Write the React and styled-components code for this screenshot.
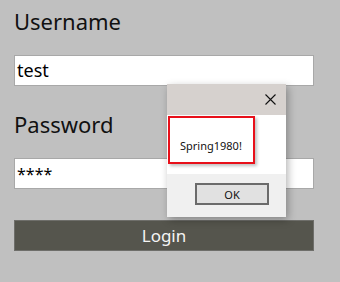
import React from "react";
import styled, { createGlobalStyle } from "styled-components";

const Global = createGlobalStyle`
  html, body {
    margin: 0;
    padding: 0;
    background: #c0c0c0;
    font-family: "Noto Sans", "Open Sans", sans-serif;
  }
`;

const Page = styled.div`
  position: relative;
  width: 340px;
  height: 282px;
  overflow: hidden;
`;

const Form = styled.div`
  display: flex;
  flex-direction: column;
  padding: 7px 0 0 14px;
  width: 300px;
`;

const Label = styled.div`
  font-size: 22px;
  color: #111;
  line-height: 28px;
  margin-left: 0;
  margin-top: ${(p) => p.top || 0}px;
  margin-bottom: ${(p) => p.bottom || 0}px;
`;

const Field = styled.div`
  height: 29px;
  background: #fff;
  border: 1px solid #a8a8a8;
  font-size: 18px;
  line-height: 29px;
  padding-left: 2px;
  color: #000;
`;

const Stars = styled.span`
  font-size: 16px;
`;

const LoginButton = styled.div`
  margin-top: 31px;
  height: 29px;
  background: #55554d;
  border: 1px solid #6e6e6a;
  color: #f4f4f4;
  font-size: 17px;
  display: flex;
  align-items: center;
  justify-content: center;
`;

const Dialog = styled.div`
  position: absolute;
  left: 167px;
  top: 84px;
  width: 119px;
  height: 133px;
  display: flex;
  flex-direction: column;
  box-shadow: 2px 3px 8px rgba(0, 0, 0, 0.3);
`;

const TitleBar = styled.div`
  height: 31px;
  background: #d6d1ce;
  display: flex;
  align-items: center;
  justify-content: flex-end;
  padding-right: 10px;
`;

const Body = styled.div`
  height: 59px;
  background: #fff;
  padding: 1px 0 0 1px;
  box-sizing: border-box;
`;

const Highlight = styled.div`
  width: 87px;
  height: 48px;
  border: 2px solid #e8101a;
  box-shadow: 2px 2px 3px rgba(0, 0, 0, 0.25);
  display: flex;
  align-items: center;
  padding-left: 10px;
  padding-top: 10px;
  box-sizing: border-box;
  font-size: 11px;
  color: #111;
`;

const Footer = styled.div`
  flex: 1;
  background: #f0f0f0;
  display: flex;
  justify-content: flex-end;
  padding: 9px 17px 0 0;
`;

const OkButton = styled.div`
  width: 70px;
  height: 18px;
  border: 2px solid #6b6b6b;
  background: #e1e1e1;
  font-size: 11px;
  color: #111;
  display: flex;
  align-items: center;
  justify-content: center;
`;

export default function App() {
  return (
    <Page>
      <Global />
      <Form>
        <Label bottom={20}>Username</Label>
        <Field>test</Field>
        <Label top={24} bottom={20}>Password</Label>
        <Field>
          <Stars>****</Stars>
        </Field>
        <LoginButton>Login</LoginButton>
      </Form>
      <Dialog>
        <TitleBar>
          <svg width="11" height="11" viewBox="0 0 11 11">
            <path d="M0.5 0.5 L10.5 10.5 M10.5 0.5 L0.5 10.5" stroke="#111" strokeWidth="1.1" fill="none" />
          </svg>
        </TitleBar>
        <Body>
          <Highlight>Spring1980!</Highlight>
        </Body>
        <Footer>
          <OkButton>OK</OkButton>
        </Footer>
      </Dialog>
    </Page>
  );
}
